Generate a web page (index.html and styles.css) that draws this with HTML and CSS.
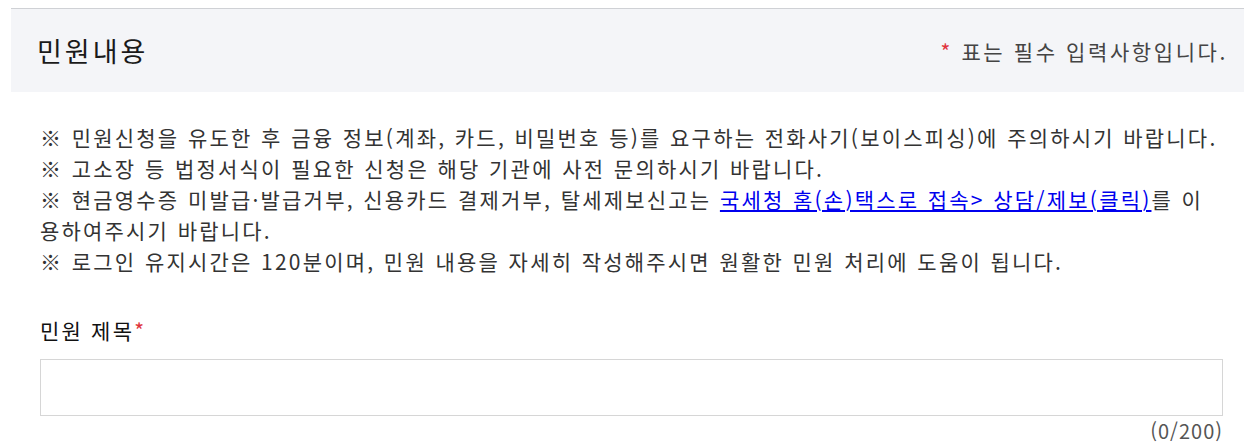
FILE: index.html
```html
<!DOCTYPE html>
<html lang="ko">
<head>
<meta charset="utf-8">
<link rel="stylesheet" href="styles.css">
</head>
<body>
<section class="panel">
  <div class="panel-head">
    <h2 class="panel-title">민원내용</h2>
    <p class="req-note"><span class="star">*</span> 표는 필수 입력사항입니다.</p>
  </div>
  <div class="panel-body">
    <ul class="notice">
      <li>※ 민원신청을 유도한 후 금융 정보(계좌, 카드, 비밀번호 등)를 요구하는 전화사기(보이스피싱)에 주의하시기 바랍니다.</li>
      <li>※ 고소장 등 법정서식이 필요한 신청은 해당 기관에 사전 문의하시기 바랍니다.</li>
      <li>※ 현금영수증 미발급·발급거부, 신용카드 결제거부, 탈세제보신고는 <a href="#" class="link">국세청 홈(손)택스로 접속&gt; 상담/제보(클릭)</a>를 이용하여주시기 바랍니다.</li>
      <li>※ 로그인 유지시간은 120분이며, 민원 내용을 자세히 작성해주시면 원활한 민원 처리에 도움이 됩니다.</li>
    </ul>
    <div class="field">
      <label class="field-label">민원 제목<span class="star">*</span></label>
      <input class="field-input" type="text">
      <div class="counter">(0/200)</div>
    </div>
  </div>
</section>
</body>
</html>
```
FILE: styles.css
```css
html, body {
  margin: 0;
  padding: 0;
  background: #fff;
}
body {
  font-family: "Noto Sans CJK KR", "Noto Sans", sans-serif;
  color: #333;
  padding: 8px 0 0 11px;
  overflow: hidden;
}
.panel {
  border-top: 1px solid #cfd1d5;
}
.panel-head {
  background: #f4f5f8;
  height: 83px;
  display: flex;
  align-items: center;
  justify-content: space-between;
  padding: 0 16px 0 26px;
}
.panel-title {
  margin: 0;
  font-size: 27px;
  font-weight: 400;
  letter-spacing: 3px;
  color: #1a1a1a;
}
.req-note {
  margin: 0;
  font-size: 21px;
  letter-spacing: 2.6px;
  color: #444;
}
.star {
  color: #e0343c;
}
.panel-body {
  padding: 30px 21px 0 29px;
}
.notice {
  list-style: none;
  margin: 0;
  padding: 0;
  font-size: 21px;
  letter-spacing: 2.2px;
  word-spacing: 0.5px;
  line-height: 31px;
  color: #333;
}
.link {
  color: #0000ee;
  text-decoration: underline;
}
.field {
  margin-top: 40px;
  display: flex;
  flex-direction: column;
}
.field-label {
  font-size: 21px;
  letter-spacing: 2.2px;
  color: #111;
  line-height: 26px;
}
.field-input {
  margin-top: 16px;
  height: 57px;
  box-sizing: border-box;
  border: 1px solid #d6d6d6;
  background: #fff;
}
.counter {
  padding-top: 4px;
  text-align: right;
  font-size: 20px;
  letter-spacing: 1px;
  color: #555;
  line-height: 22px;
}
```
